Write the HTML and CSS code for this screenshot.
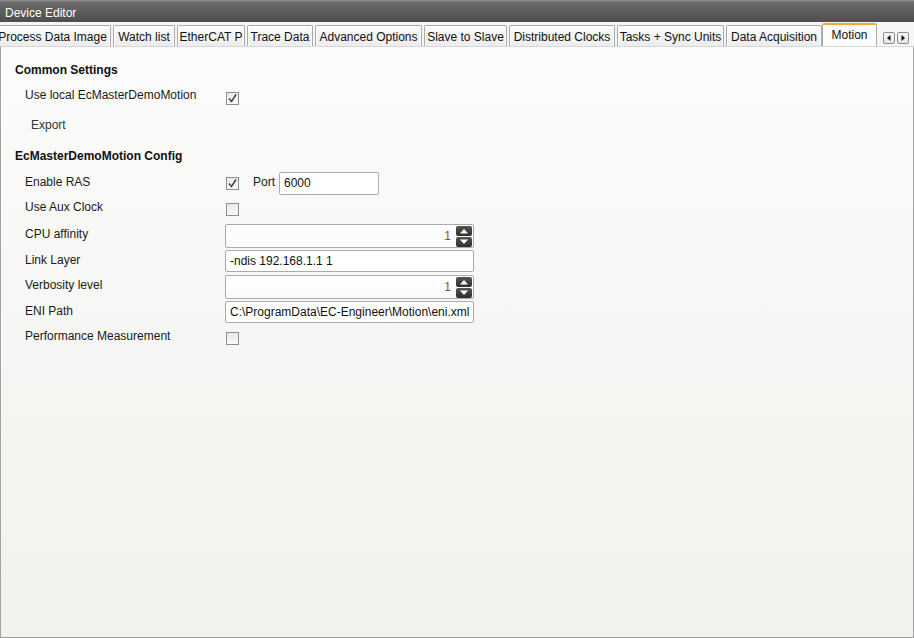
FILE: index.html
```html
<!DOCTYPE html>
<html lang="en">
<head>
<meta charset="utf-8">
<title>Device Editor</title>
<link rel="stylesheet" href="styles.css">
</head>
<body>
<div class="window">
  <div class="titlebar">Device Editor</div>
  <div class="tabstrip">
    <div class="tabs">
      <div class="tab tab-pdi">Process Data Image</div>
      <div class="tab tab-watch">Watch list</div>
      <div class="tab tab-ecat">EtherCAT P</div>
      <div class="tab tab-trace">Trace Data</div>
      <div class="tab tab-adv">Advanced Options</div>
      <div class="tab tab-s2s">Slave to Slave</div>
      <div class="tab tab-dc">Distributed Clocks</div>
      <div class="tab tab-tasks">Tasks + Sync Units</div>
      <div class="tab tab-daq">Data Acquisition</div>
      <div class="tab tab-motion is-selected">Motion</div>
    </div>
    <div class="tab-scroll">
      <span class="scroll-btn"><svg width="10" height="10" viewBox="0 0 10 10"><polygon points="6.5,2 6.5,8 3,5" fill="#111"/></svg></span>
      <span class="scroll-btn"><svg width="10" height="10" viewBox="0 0 10 10"><polygon points="3.5,2 3.5,8 7,5" fill="#111"/></svg></span>
    </div>
  </div>
  <div class="panel">
    <div class="section-title first">Common Settings</div>
    <div class="row row-local">
      <span class="label">Use local EcMasterDemoMotion</span>
      <span class="checkbox is-checked"><svg width="11" height="11" viewBox="0 0 11 11"><polyline points="2,5.5 4.5,8.5 9,1.5" fill="none" stroke="#444" stroke-width="1.5"/></svg></span>
    </div>
    <div class="export">Export</div>
    <div class="section-title second">EcMasterDemoMotion Config</div>

    <div class="row row-ras">
      <span class="label">Enable RAS</span>
      <span class="checkbox is-checked cb-ras"><svg width="11" height="11" viewBox="0 0 11 11"><polyline points="2,5.5 4.5,8.5 9,1.5" fill="none" stroke="#444" stroke-width="1.5"/></svg></span>
      <span class="port-label">Port</span>
      <span class="textbox port-box">6000</span>
    </div>
    <div class="row row-aux">
      <span class="label">Use Aux Clock</span>
      <span class="checkbox cb-aux"></span>
    </div>
    <div class="row row-cpu">
      <span class="label">CPU affinity</span>
      <span class="spinner">
        <span class="spin-value">1</span>
        <span class="spin-btns">
          <span class="spin-btn"><svg width="10" height="6" viewBox="0 0 10 6"><polygon points="1,5.5 9,5.5 5,1" fill="#fff"/></svg></span>
          <span class="spin-btn"><svg width="10" height="6" viewBox="0 0 10 6"><polygon points="1,0.5 9,0.5 5,5" fill="#fff"/></svg></span>
        </span>
      </span>
    </div>
    <div class="row row-link">
      <span class="label">Link Layer</span>
      <span class="textbox wide-box">-ndis 192.168.1.1 1</span>
    </div>
    <div class="row row-verb">
      <span class="label">Verbosity level</span>
      <span class="spinner">
        <span class="spin-value">1</span>
        <span class="spin-btns">
          <span class="spin-btn"><svg width="10" height="6" viewBox="0 0 10 6"><polygon points="1,5.5 9,5.5 5,1" fill="#fff"/></svg></span>
          <span class="spin-btn"><svg width="10" height="6" viewBox="0 0 10 6"><polygon points="1,0.5 9,0.5 5,5" fill="#fff"/></svg></span>
        </span>
      </span>
    </div>
    <div class="row row-eni">
      <span class="label">ENI Path</span>
      <span class="textbox wide-box">C:\ProgramData\EC-Engineer\Motion\eni.xml</span>
    </div>
    <div class="row row-perf">
      <span class="label">Performance Measurement</span>
      <span class="checkbox cb-perf"></span>
    </div>
  </div>
</div>
</body>
</html>
```

FILE: styles.css
```css
* { box-sizing: border-box; }

html, body {
  margin: 0;
  padding: 0;
  width: 914px;
  height: 638px;
  overflow: hidden;
  font-family: "Liberation Sans", Arial, sans-serif;
  font-size: 12px;
  color: #1a1a1a;
  background: #f4f4f4;
}

.window {
  width: 914px;
  height: 638px;
  display: flex;
  flex-direction: column;
}

.titlebar {
  height: 22px;
  padding: 4px 0 0 5px;
  line-height: 16px;
  color: #ffffff;
  background: linear-gradient(#7a7a7a 0px, #6a6a6a 2px, #4d4d4d 100%);
  border-top: 1px solid #8a8a8a;
}

.tabstrip {
  height: 24px;
  display: flex;
  align-items: flex-end;
  background: #f6f6f6;
  position: relative;
}

.tabs {
  display: flex;
  align-items: flex-end;
  overflow: hidden;
  height: 24px;
}

.tab {
  flex: none;
  height: 21px;
  margin-right: 2px;
  padding-top: 4px;
  line-height: 15px;
  text-align: center;
  white-space: nowrap;
  overflow: hidden;
  color: #111;
  background: linear-gradient(#fbfbfb, #ececec);
  border: 1px solid #a9a9a9;
  border-bottom: none;
  border-radius: 2px 2px 0 0;
  box-shadow: inset 1px 1px 0 #ffffff, inset -1px 0 0 #ffffff;
}

.tab-pdi   { width: 117px; margin-left: -6px; }
.tab-watch { width: 62px; }
.tab-ecat  { width: 68px; }
.tab-trace { width: 66px; }
.tab-adv   { width: 107px; }
.tab-s2s   { width: 83px; }
.tab-dc    { width: 106px; }
.tab-tasks { width: 107px; }
.tab-daq   { width: 96px; margin-right: 0; }

.tab.is-selected {
  width: 55px;
  height: 23px;
  padding-top: 3px;
  background: #fbfbfb;
  border-top: 2px solid #f2a73a;
  border-color: #f2a73a #a9a9a9 transparent #a9a9a9;
  box-shadow: none;
  position: relative;
  z-index: 2;
}

.tab-scroll {
  display: flex;
  gap: 2px;
  margin-left: 4px;
  margin-bottom: 2px;
}

.scroll-btn {
  width: 12px;
  height: 12px;
  display: flex;
  align-items: center;
  justify-content: center;
  border: 1px solid #8c8c8c;
  border-radius: 2px;
  background: linear-gradient(#fdfdfd, #e4e4e4);
}

.panel {
  flex: 1;
  border: 1px solid #a2a2a2;
  border-top: 1px solid #d8d8d8;
  background: linear-gradient(#fbfbfb 0%, #f6f6f4 50%, #f2f1ec 100%);
  padding-left: 14px;
}

.section-title {
  font-weight: bold;
  line-height: 15px;
  color: #111;
}

.section-title.first { margin-top: 16px; }
.section-title.second { margin-top: 16px; margin-bottom: 8px; }

.row {
  display: flex;
  align-items: flex-start;
  padding-left: 10px;
}

.label {
  width: 200px;
  flex: none;
  padding-top: 3px;
  line-height: 15px;
  white-space: nowrap;
}

.row-local { margin-top: 7px; height: 32px; }
.row-local .checkbox { margin-top: 7px; }

.export {
  padding-left: 16px;
  padding-top: 1px;
  line-height: 15px;
  color: #333;
}

.row-ras  { height: 25px; }
.row-aux  { height: 27px; }
.row-cpu  { height: 26px; }
.row-link { height: 25px; }
.row-verb { height: 26px; }
.row-eni  { height: 25px; }
.row-perf { height: 20px; margin-top: 0; }

.checkbox {
  width: 13px;
  height: 13px;
  margin-left: 1px;
  flex: none;
  display: flex;
  align-items: center;
  justify-content: center;
  border: 1px solid #8e8e8e;
  background: linear-gradient(#e9e9e9, #f8f8f8);
}

.cb-ras  { margin-top: 5px; }
.cb-aux  { margin-top: 6px; }
.cb-perf { margin-top: 6px; }

.port-label {
  margin-left: 14px;
  width: 26px;
  padding-top: 3px;
  line-height: 15px;
}

.textbox {
  height: 23px;
  line-height: 21px;
  padding-left: 4px;
  border: 1px solid #ababab;
  border-radius: 2px;
  background: #ffffff;
  color: #111;
  white-space: nowrap;
  overflow: hidden;
}

.port-box {
  width: 100px;
}

.wide-box {
  width: 249px;
  height: 22px;
  line-height: 20px;
  padding-left: 4px;
}

.spinner {
  width: 249px;
  height: 24px;
  display: flex;
  align-items: center;
  justify-content: flex-end;
  padding-right: 1px;
  border: 1px solid #ababab;
  border-radius: 2px;
  background: linear-gradient(#ffffff, #fafafa);
}

.spin-value {
  color: #7a5a30;
  margin-right: 5px;
  line-height: 15px;
}

.spin-btns {
  display: flex;
  flex-direction: column;
  gap: 1px;
}

.spin-btn {
  width: 16px;
  height: 10px;
  display: flex;
  align-items: center;
  justify-content: center;
  border-radius: 2px;
  background: linear-gradient(#555555, #2e2e2e);
}
```
